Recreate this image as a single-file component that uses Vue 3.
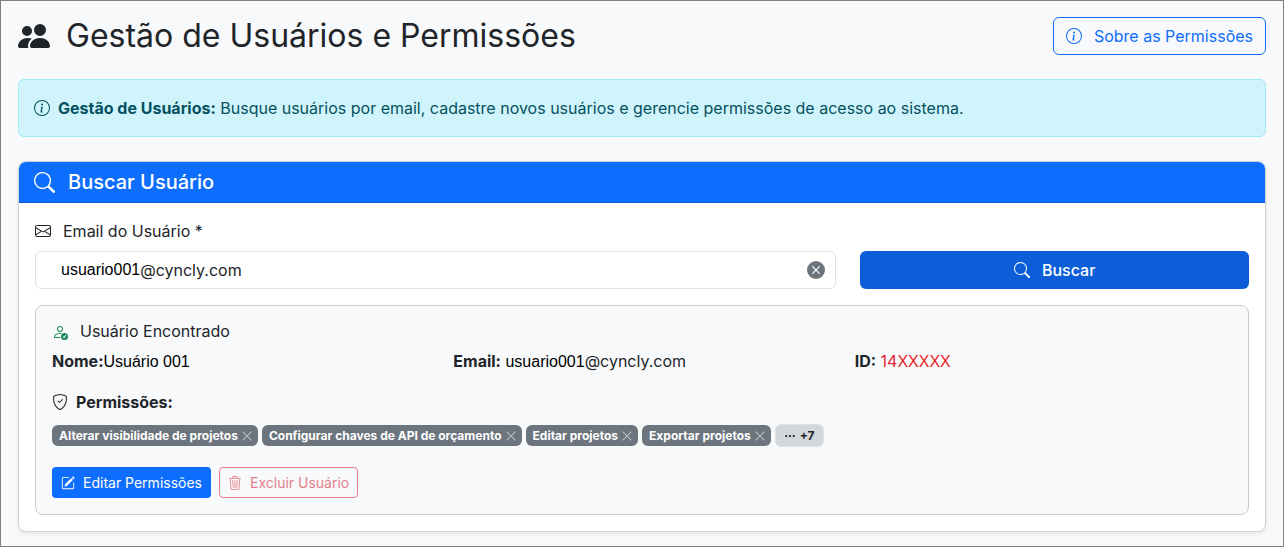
<script setup>
import { ref } from 'vue'

const login = ref('usuario001')
const permissions = ref([
  'Alterar visibilidade de projetos',
  'Configurar chaves de API de orçamento',
  'Editar projetos',
  'Exportar projetos',
])

function removePermission(name) {
  permissions.value = permissions.value.filter((item) => item !== name)
}
</script>

<template>
  <svg class="sprite" aria-hidden="true">
    <symbol id="info" viewBox="0 0 16 16">
      <path d="M8 15A7 7 0 1 1 8 1a7 7 0 0 1 0 14m0 1A8 8 0 1 0 8 0a8 8 0 0 0 0 16" />
      <path d="m8.930 6.588-2.290.287-.082.380.450.083c.294.070.352.176.288.469l-.738 3.468c-.194.897.105 1.319.808 1.319.545 0 1.178-.252 1.465-.598l.088-.416c-.2.176-.492.246-.686.246-.275 0-.375-.193-.304-.533zM9 4.500a1 1 0 1 1-2 0 1 1 0 0 1 2 0" />
    </symbol>
    <symbol id="search" viewBox="0 0 16 16">
      <path d="M11.742 10.344a6.500 6.500 0 1 0-1.397 1.398h-.001q.044.060.098.115l3.850 3.850a1 1 0 0 0 1.415-1.414l-3.850-3.850a1 1 0 0 0-.115-.100zM12 6.500a5.500 5.500 0 1 1-11 0 5.500 5.500 0 0 1 11 0" />
    </symbol>
    <symbol id="close" viewBox="0 0 16 16">
      <path d="M2.146 2.854a.5.500 0 1 1 .708-.708L8 7.293l5.146-5.147a.5.500 0 0 1 .708.708L8.707 8l5.147 5.146a.5.500 0 0 1-.708.708L8 8.707l-5.146 5.147a.5.500 0 0 1-.708-.708L7.293 8z" />
    </symbol>
  </svg>

  <main class="page">
    <header class="page-header">
      <h1>
        <svg class="icon" viewBox="0 0 16 16" aria-hidden="true">
          <path d="M7 14s-1 0-1-1 1-4 5-4 5 3 5 4-1 1-1 1zm4-6a3 3 0 1 0 0-6 3 3 0 0 0 0 6m-5.784 6A2.240 2.240 0 0 1 5 13c0-1.355.680-2.750 1.936-3.720A6.300 6.300 0 0 0 5 9c-4 0-5 3-5 4s1 1 1 1zM4.500 8a2.500 2.500 0 1 0 0-5 2.500 2.500 0 0 0 0 5" />
        </svg>
        Gestão de Usuários e Permissões
      </h1>
      <button type="button" class="btn btn-about">
        <svg class="icon" aria-hidden="true"><use href="#info" /></svg>
        Sobre as Permissões
      </button>
    </header>

    <div class="alert" role="status">
      <svg class="icon" aria-hidden="true"><use href="#info" /></svg>
      <p><strong>Gestão de Usuários:</strong> Busque usuários por email, cadastre novos usuários e gerencie permissões de acesso ao sistema.</p>
    </div>

    <section class="card">
      <h2 class="card-header">
        <svg class="icon" aria-hidden="true"><use href="#search" /></svg>
        Buscar Usuário
      </h2>
      <div class="card-body">
        <label class="field-label" for="email">
          <svg class="icon" viewBox="0 0 16 16" aria-hidden="true">
            <path d="M0 4a2 2 0 0 1 2-2h12a2 2 0 0 1 2 2v8a2 2 0 0 1-2 2H2a2 2 0 0 1-2-2zm2-1a1 1 0 0 0-1 1v.217l7 4.200 7-4.200V4a1 1 0 0 0-1-1zm13 2.383-4.708 2.825L15 11.105zm-.034 6.876-5.640-3.471L8 9.583l-1.326-.795-5.640 3.470A1 1 0 0 0 2 13h12a1 1 0 0 0 .966-.741M1 11.105l4.708-2.897L1 5.383z" />
          </svg>
          Email do Usuário *
        </label>
        <form class="search-row" @submit.prevent>
          <div class="field">
            <input id="email" v-model="login" class="arial" type="text" size="1" autocomplete="off" />
            <span class="domain">@cyncly.com</span>
            <button type="button" class="clear" aria-label="Limpar email" @click="login = ''">
              <svg viewBox="0 0 16 16" aria-hidden="true">
                <path d="M16 8A8 8 0 1 1 0 8a8 8 0 0 1 16 0M5.354 4.646a.5.500 0 1 0-.708.708L7.293 8l-2.647 2.646a.5.500 0 0 0 .708.708L8 8.707l2.646 2.647a.5.500 0 0 0 .708-.708L8.707 8l2.647-2.646a.5.500 0 0 0-.708-.708L8 7.293z" />
              </svg>
            </button>
          </div>
          <button type="submit" class="btn btn-search">
            <svg class="icon" aria-hidden="true"><use href="#search" /></svg>
            Buscar
          </button>
        </form>

        <article class="result">
          <h3>
            <svg class="icon" viewBox="0 0 16 16" aria-hidden="true">
              <path d="M12.500 16a3.500 3.500 0 1 0 0-7 3.500 3.500 0 0 0 0 7m1.679-4.493-1.335 2.226a.75.750 0 0 1-1.174.144l-.774-.773a.5.500 0 0 1 .708-.708l.547.548 1.170-1.951a.5.500 0 1 1 .858.514M11 5a3 3 0 1 1-6 0 3 3 0 0 1 6 0M8 7a2 2 0 1 0 0-4 2 2 0 0 0 0 4" />
              <path d="M8.256 14a4.500 4.500 0 0 1-.229-1.004H3c.001-.246.154-.986.832-1.664C4.484 10.680 5.711 10 8 10q.390 0 .740.025c.226-.341.496-.650.804-.918Q8.844 9.002 8 9c-5 0-6 3-6 4s1 1 1 1z" />
            </svg>
            Usuário Encontrado
          </h3>
          <div class="details">
            <p><strong>Nome:</strong><span class="arial">Usuário 001</span></p>
            <p><strong>Email:</strong> <span class="arial">usuario001</span>@cyncly.com</p>
            <p><strong>ID:</strong> <span class="id">14<span class="arial">XXXXX</span></span></p>
          </div>
          <h4>
            <svg class="icon" viewBox="0 0 16 16" aria-hidden="true">
              <path d="M5.338 1.590a61 61 0 0 0-2.837.856.480.480 0 0 0-.328.390c-.554 4.157.726 7.190 2.253 9.188a10.700 10.700 0 0 0 2.287 2.233c.346.244.652.420.893.533q.180.085.293.118a1 1 0 0 0 .101.025 1 1 0 0 0 .100-.025q.114-.034.294-.118c.240-.113.547-.290.893-.533a10.700 10.700 0 0 0 2.287-2.233c1.527-1.997 2.807-5.031 2.253-9.188a.480.480 0 0 0-.328-.390c-.651-.213-1.750-.560-2.837-.855C9.552 1.290 8.531 1.067 8 1.067c-.530 0-1.552.223-2.662.524zM5.072.560C6.157.265 7.310 0 8 0s1.843.265 2.928.560c1.110.300 2.229.655 2.887.870a1.540 1.540 0 0 1 1.044 1.262c.596 4.477-.787 7.795-2.465 9.990a11.800 11.800 0 0 1-2.517 2.453 7 7 0 0 1-1.048.625c-.280.132-.581.240-.829.240s-.548-.108-.829-.240a7 7 0 0 1-1.048-.625 11.800 11.800 0 0 1-2.517-2.453C1.928 10.487.545 7.169 1.141 2.692A1.540 1.540 0 0 1 2.185 1.430 63 63 0 0 1 5.072.560" />
              <path d="M10.854 5.146a.5.500 0 0 1 0 .708l-3 3a.5.500 0 0 1-.708 0l-1.500-1.500a.5.500 0 1 1 .708-.708L7.500 7.793l2.646-2.647a.5.500 0 0 1 .708 0" />
            </svg>
            Permissões:
          </h4>
          <ul class="badges">
            <li v-for="name in permissions" :key="name" class="badge">
              {{ name }}
              <button type="button" :aria-label="`Remover ${name}`" @click="removePermission(name)">
                <svg aria-hidden="true"><use href="#close" /></svg>
              </button>
            </li>
            <li>
              <button type="button" class="more">
                <svg viewBox="0 0 16 16" aria-hidden="true">
                  <path d="M3 9.500a1.500 1.500 0 1 1 0-3 1.500 1.500 0 0 1 0 3m5 0a1.500 1.500 0 1 1 0-3 1.500 1.500 0 0 1 0 3m5 0a1.500 1.500 0 1 1 0-3 1.500 1.500 0 0 1 0 3" />
                </svg>
                +7
              </button>
            </li>
          </ul>
          <div class="actions">
            <button type="button" class="btn btn-small btn-edit">
              <svg class="icon" viewBox="0 0 16 16" aria-hidden="true">
                <path d="M15.502 1.940a.5.500 0 0 1 0 .706L14.459 3.690l-2-2L13.502.646a.5.500 0 0 1 .707 0l1.293 1.293zm-1.750 2.456-2-2L4.939 9.210a.5.500 0 0 0-.121.196l-.805 2.414a.25.250 0 0 0 .316.316l2.414-.805a.5.500 0 0 0 .196-.120l6.813-6.814z" />
                <path fill-rule="evenodd" d="M1 13.500A1.500 1.500 0 0 0 2.500 15h11a1.500 1.500 0 0 0 1.500-1.500v-6a.5.500 0 0 0-1 0v6a.5.500 0 0 1-.5.500h-11a.5.500 0 0 1-.5-.5v-11a.5.500 0 0 1 .5-.5H9a.5.500 0 0 0 0-1H2.500A1.500 1.500 0 0 0 1 2.500z" />
              </svg>
              Editar Permissões
            </button>
            <button type="button" class="btn btn-small btn-delete" disabled>
              <svg class="icon" viewBox="0 0 16 16" aria-hidden="true">
                <path d="M6.500 1h3a.5.500 0 0 1 .5.500v1H6v-1a.5.500 0 0 1 .5-.5M11 2.500v-1A1.500 1.500 0 0 0 9.500 0h-3A1.500 1.500 0 0 0 5 1.500v1H1.500a.5.500 0 0 0 0 1h.538l.853 10.660A2 2 0 0 0 4.885 16h6.230a2 2 0 0 0 1.994-1.840l.853-10.660h.538a.5.500 0 0 0 0-1zm1.958 1-.846 10.580a1 1 0 0 1-.997.920h-6.230a1 1 0 0 1-.997-.920L3.042 3.500zm-7.487 1a.5.500 0 0 1 .528.470l.5 8.500a.5.500 0 0 1-.998.060L5 5.030a.5.500 0 0 1 .470-.530zm5.058 0a.5.500 0 0 1 .470.530l-.5 8.500a.5.500 0 1 1-.998-.060l.5-8.500a.5.500 0 0 1 .528-.470M8 4.500a.5.500 0 0 1 .5.500v8.500a.5.500 0 0 1-1 0V5a.5.500 0 0 1 .5-.5" />
              </svg>
              Excluir Usuário
            </button>
          </div>
        </article>
      </div>
    </section>
  </main>
</template>

<style>
body {
  margin: 0;
  background: #f8f9fb;
}
</style>

<style scoped>
* {
  box-sizing: border-box;
}
.sprite {
  position: absolute;
  width: 0;
  height: 0;
}
svg {
  flex: none;
  fill: currentColor;
}
.page {
  min-height: 100vh;
  padding: 16px 17px 14px;
  border: 1px solid #7f7f7f;
  color: #212529;
  font: 400 16px/24px Inter, "Liberation Sans", sans-serif;
}
h1, h2, h3, h4, p, ul {
  margin: 0;
  padding: 0;
  font-weight: 400;
}
button {
  font: inherit;
  cursor: pointer;
}
strong {
  font-weight: 700;
}
.icon {
  width: 16px;
  height: 16px;
}
.page-header {
  display: flex;
  align-items: center;
  justify-content: space-between;
  margin-bottom: 24px;
}
h1 {
  display: flex;
  align-items: center;
  gap: 16px;
  font-size: 32px;
  line-height: 38px;
}
h1 .icon {
  width: 32px;
  height: 32px;
}
.btn {
  display: flex;
  align-items: center;
  justify-content: center;
  gap: 12px;
  padding: 6px 12px;
  border: 1px solid transparent;
  border-radius: 6px;
}
.btn-about {
  border-color: #0d6efd;
  background: transparent;
  color: #0d6efd;
}
.alert {
  display: flex;
  align-items: center;
  gap: 8px;
  margin-bottom: 24px;
  padding: 16px 15px;
  border: 1px solid #9eeaf9;
  border-radius: 6px;
  background: #cff4fc;
  color: #055160;
}
.card {
  border: 1px solid #d0d3d6;
  border-radius: 8px;
  background: #fff;
  box-shadow: 0 2px 4px rgba(0, 0, 0, 0.08);
}
.card-header {
  display: flex;
  align-items: center;
  gap: 13px;
  padding: 8px 15px;
  border-bottom: 1px solid #0b5cd6;
  border-radius: 7px 7px 0 0;
  background: #0d6efd;
  color: #fff;
  font-size: 20px;
  font-weight: 500;
}
.card-header .icon {
  width: 21px;
  height: 21px;
}
.card-body {
  padding: 16px;
}
.field-label {
  display: flex;
  align-items: center;
  gap: 12px;
  margin-bottom: 8px;
}
.search-row {
  display: grid;
  grid-template-columns: repeat(12, 1fr);
  gap: 24px;
  margin-bottom: 16px;
}
.field {
  display: flex;
  align-items: center;
  grid-column: span 8;
  padding: 6px 10px 6px 25px;
  border: 1px solid #dee2e6;
  border-radius: 6px;
  background: #fff;
}
.field input {
  field-sizing: content;
  min-width: 1px;
  height: 24px;
  padding: 0;
  border: 0;
  outline: 0;
  background: transparent;
  font-size: 16px;
}
.arial {
  color: #000;
  font-family: "Liberation Sans", Arial, sans-serif;
}
.clear {
  display: flex;
  margin-left: auto;
  padding: 0;
  border: 0;
  background: none;
  color: #6c757d;
}
.clear svg {
  width: 18px;
  height: 18px;
}
.btn-search {
  grid-column: span 4;
  background: #0b5ed7;
  color: #fff;
  font-weight: 500;
}
.result {
  padding: 16px;
  border: 1px solid #c9cccf;
  border-radius: 8px;
  background: #f8f9fb;
}
h3 {
  display: flex;
  align-items: center;
  gap: 12px;
  margin-bottom: 8px;
  font-size: 16px;
  line-height: 19px;
}
h3 .icon {
  color: #198754;
}
.details {
  display: grid;
  grid-template-columns: repeat(3, 1fr);
  gap: 24px;
  margin-bottom: 16px;
}
.id,
.id .arial {
  color: #e32636;
}
.id .arial {
  color: #ed1c24;
}
h4 {
  display: flex;
  align-items: center;
  gap: 8px;
  margin-bottom: 10px;
  font-size: 16px;
  font-weight: 700;
}
.badges {
  display: flex;
  flex-wrap: wrap;
  align-items: center;
  gap: 4px;
  margin-bottom: 20px;
  list-style: none;
  font-size: 12px;
  font-weight: 700;
  line-height: 13px;
}
.badge {
  display: flex;
  align-items: center;
  gap: 3px;
  padding: 4px 5px 4px 7px;
  border-radius: 6px;
  background: #6c757d;
  color: #fff;
}
.badge button {
  display: flex;
  padding: 0;
  border: 0;
  background: none;
  color: #ced2d5;
}
.badge svg {
  width: 12px;
  height: 12px;
}
.more {
  display: flex;
  align-items: center;
  gap: 4px;
  padding: 4px 8px;
  border: 1px solid #dee2e6;
  border-radius: 6px;
  background: #d3d7da;
  color: #212529;
}
.more svg {
  width: 12px;
  height: 12px;
}
.actions {
  display: flex;
  gap: 8px;
}
.btn-small {
  gap: 8px;
  padding: 4px 8px;
  border-radius: 4px;
  font-size: 14px;
  line-height: 21px;
}
.btn-small .icon {
  width: 14px;
  height: 14px;
}
.btn-edit {
  background: #0d6efd;
  color: #fff;
}
.btn-delete {
  border-color: #e77c87;
  background: transparent;
  color: #e4818b;
  cursor: default;
}
</style>
